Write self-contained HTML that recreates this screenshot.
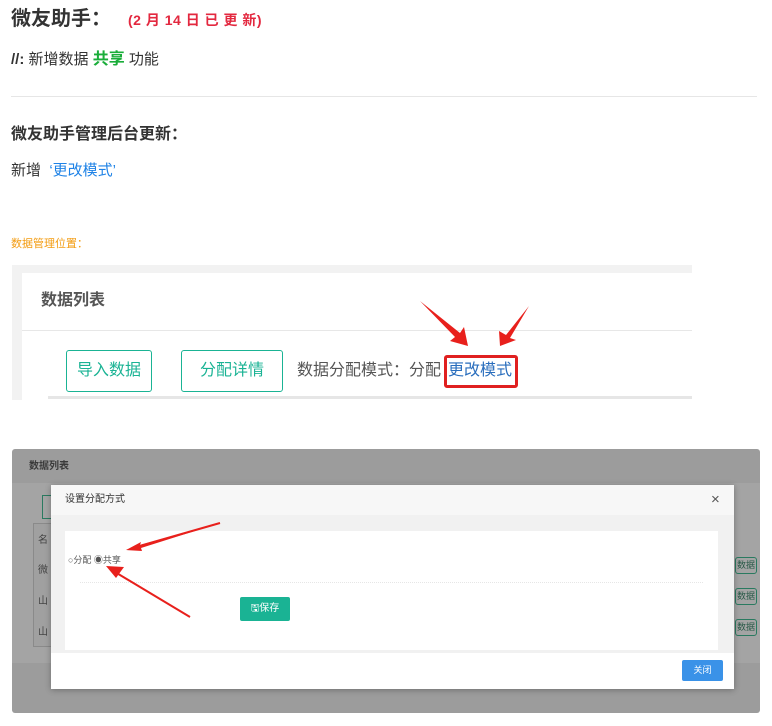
<!DOCTYPE html>
<html><head><meta charset="utf-8"><style>
*{margin:0;padding:0;box-sizing:border-box}
body{width:772px;height:726px;background:#fff;position:relative;overflow:hidden;font-family:"Liberation Sans","Noto Sans CJK SC",sans-serif;color:#333}
.a{position:absolute;white-space:nowrap}
</style></head><body>
<div class="a" style="left:11px;top:5px;font-size:20px;font-weight:bold;color:#333;line-height:28px">微友助手：</div>
<div class="a" style="left:128px;top:10px;font-size:14px;font-weight:bold;color:#e3283f;letter-spacing:0.5px;line-height:20px">(2 月 14 日 已 更 新)</div>
<div class="a" style="left:11px;top:49px;font-size:15px;line-height:22px;color:#333"><b>//:</b> 新增数据 <b style="color:#1aad3a;font-size:16px">共享</b> 功能</div>
<div class="a" style="left:11px;top:96px;width:746px;height:1px;background:#e6e6e6"></div>
<div class="a" style="left:11px;top:124px;font-size:16px;font-weight:bold;line-height:22px;color:#333">微友助手管理后台更新：</div>
<div class="a" style="left:11px;top:160px;font-size:15px;line-height:22px;color:#333">新增 &nbsp;<span style="color:#1e82e6">‘更改模式’</span></div>
<div class="a" style="left:11px;top:236px;font-size:11px;line-height:16px;color:#f39c12">数据管理位置：</div>

<!-- screenshot 1 -->
<div class="a" style="left:12px;top:265px;width:680px;height:135px;background:#f2f2f2"></div>
<div class="a" style="left:22px;top:273px;width:670px;height:127px;background:#fff"></div>
<div class="a" style="left:41px;top:290px;font-size:16px;font-weight:bold;color:#555;line-height:22px">数据列表</div>
<div class="a" style="left:22px;top:330px;width:670px;height:1px;background:#e7e7e7"></div>
<div class="a" style="left:66px;top:350px;width:86px;height:42px;border:1px solid #1ab394;border-radius:3px;color:#1ab394;font-size:16px;line-height:40px;text-align:center">导入数据</div>
<div class="a" style="left:181px;top:350px;width:102px;height:42px;border:1px solid #1ab394;border-radius:3px;color:#1ab394;font-size:16px;line-height:40px;text-align:center">分配详情</div>
<div class="a" style="left:297px;top:360px;font-size:16px;color:#555;line-height:22px">数据分配模式：分配</div>
<div class="a" style="left:444px;top:355px;width:74px;height:33px;border:3px solid #e02020;border-radius:3px"></div>
<div class="a" style="left:448px;top:360px;font-size:16px;color:#2a6ebd;line-height:22px">更改模式</div>
<div class="a" style="left:48px;top:396px;width:644px;height:3px;background:#e6e6e6"></div>
<svg class="a" style="left:0;top:0" width="772" height="726">
<polygon points="420,301 460,333 464,327 468,346 450,341 455,337" fill="#e8201c"/>
<polygon points="529,306 506,335 499,331 500,346 516,340 510,338" fill="#e8201c"/>
</svg>

<!-- screenshot 2 -->
<div class="a" style="left:12px;top:449px;width:748px;height:264px;background:#9c9c9c;border-radius:3px"></div>
<div class="a" style="left:12px;top:483px;width:748px;height:180px;background:#a4a4a4"></div>
<div class="a" style="left:29px;top:460px;font-size:10px;font-weight:bold;color:#3a3a3a;line-height:14px">数据列表</div>
<div class="a" style="left:42px;top:495px;width:10px;height:24px;border:1px solid #2a7a60"></div>
<div class="a" style="left:33px;top:523px;width:20px;height:124px;border:1px solid #8a8a8a;background:#a0a0a0"></div>
<div class="a" style="left:38px;top:531px;font-size:10px;color:#444">名</div>
<div class="a" style="left:38px;top:561px;font-size:10px;color:#444">微</div>
<div class="a" style="left:38px;top:592px;font-size:10px;color:#444">山</div>
<div class="a" style="left:38px;top:623px;font-size:10px;color:#444">山</div>
<div class="a" style="left:735px;top:557px;width:22px;height:17px;border:1px solid #2a7a60;border-radius:3px;font-size:9px;color:#2a5a48;line-height:15px;text-align:center">数据</div>
<div class="a" style="left:735px;top:588px;width:22px;height:17px;border:1px solid #2a7a60;border-radius:3px;font-size:9px;color:#2a5a48;line-height:15px;text-align:center">数据</div>
<div class="a" style="left:735px;top:619px;width:22px;height:17px;border:1px solid #2a7a60;border-radius:3px;font-size:9px;color:#2a5a48;line-height:15px;text-align:center">数据</div>

<div class="a" style="left:51px;top:485px;width:683px;height:204px;background:#fff;box-shadow:0 1px 6px rgba(0,0,0,.3)"></div>
<div class="a" style="left:51px;top:485px;width:683px;height:30px;background:#f7f7f7"></div>
<div class="a" style="left:65px;top:492px;font-size:10px;color:#333;line-height:16px">设置分配方式</div>
<div class="a" style="left:711px;top:490px;font-size:15px;color:#555;line-height:20px">×</div>
<div class="a" style="left:51px;top:515px;width:683px;height:138px;background:#f1f1f1"></div>
<div class="a" style="left:65px;top:531px;width:653px;height:119px;background:#fff"></div>
<div class="a" style="left:68px;top:554px;font-size:9px;color:#555;line-height:12px">○分配 ◉共享</div>
<div class="a" style="left:80px;top:582px;width:623px;border-top:1px dotted #e6e6e6"></div>
<div class="a" style="left:240px;top:597px;width:50px;height:24px;background:#1ab394;border-radius:2px;color:#fff;font-size:10px;line-height:24px;text-align:center">🖫保存</div>
<div class="a" style="left:682px;top:660px;width:41px;height:21px;background:#3a92e8;border-radius:2px;color:#fff;font-size:9px;line-height:21px;text-align:center">关闭</div>
<svg class="a" style="left:0;top:0" width="772" height="726">
<polygon points="220,523 140,545 141,542 126,550 142,551 141,548" fill="#e8201c"/>
<line x1="220" y1="523" x2="136" y2="547" stroke="#e8201c" stroke-width="2"/>
<line x1="190" y1="617" x2="115" y2="572" stroke="#e8201c" stroke-width="2"/>
<polygon points="106,566 124,567 116,578" fill="#e8201c"/>
</svg>
</body></html>
